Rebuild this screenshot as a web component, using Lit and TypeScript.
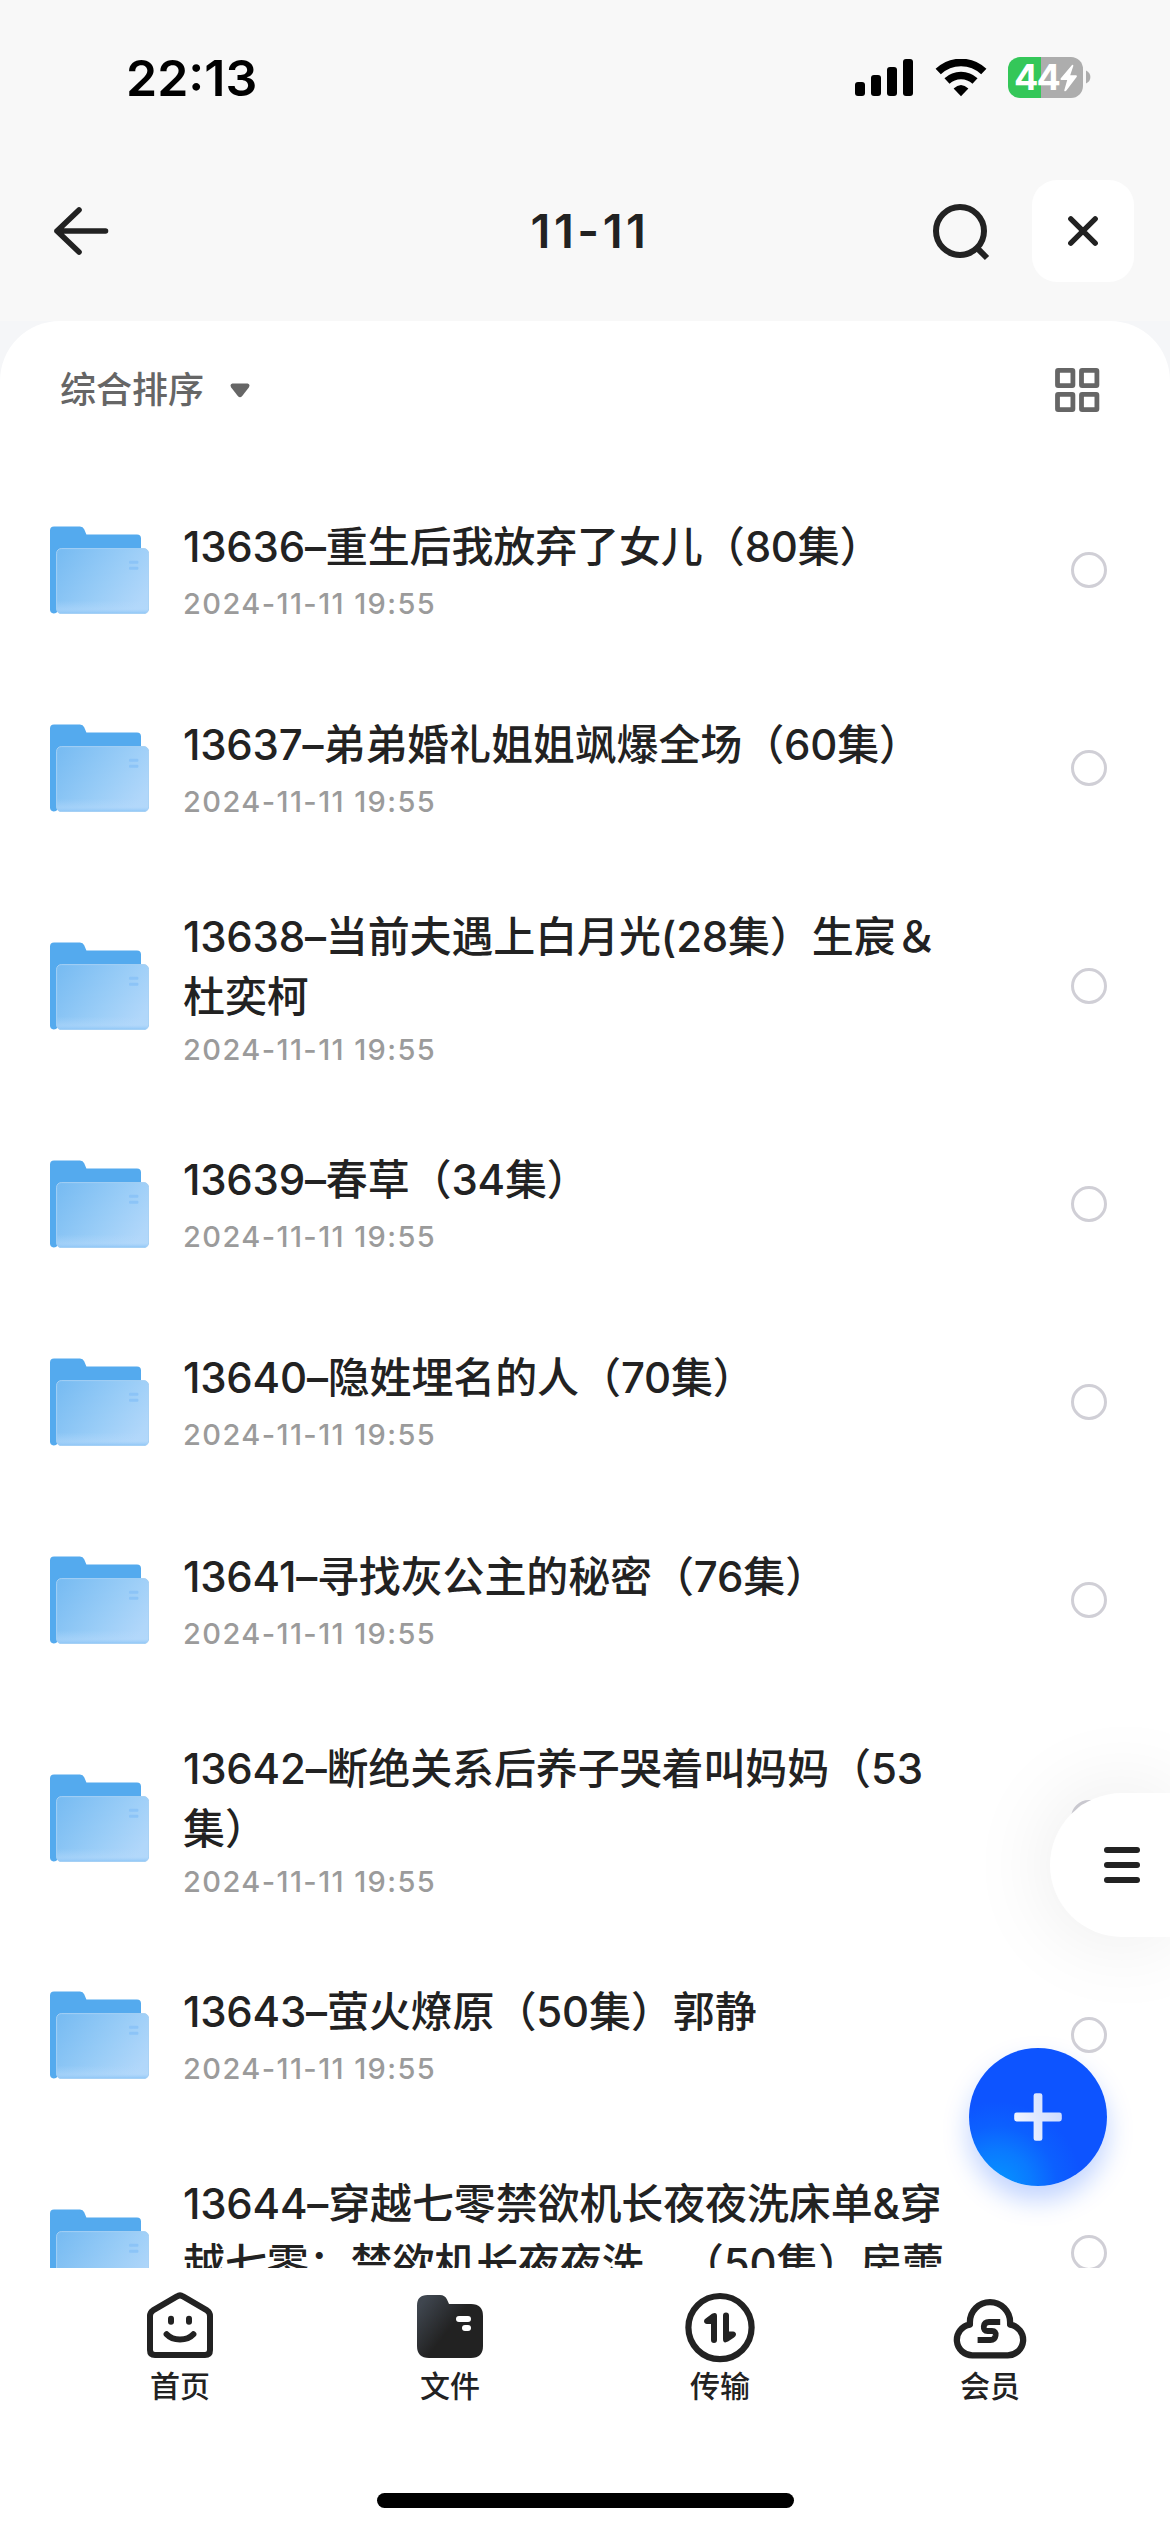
import { LitElement, html, css, svg } from "lit";
import { customElement, property } from "lit/decorators.js";

interface Entry {
  lines: string[];
  time: string;
}

const ENTRIES: Entry[] = [
  { lines: ["13636–重生后我放弃了女儿（80集）"], time: "2024-11-11 19:55" },
  { lines: ["13637–弟弟婚礼姐姐飒爆全场（60集）"], time: "2024-11-11 19:55" },
  { lines: ["13638–当前夫遇上白月光(28集）生宸＆", "杜奕柯"], time: "2024-11-11 19:55" },
  { lines: ["13639–春草（34集）"], time: "2024-11-11 19:55" },
  { lines: ["13640–隐姓埋名的人（70集）"], time: "2024-11-11 19:55" },
  { lines: ["13641–寻找灰公主的秘密（76集）"], time: "2024-11-11 19:55" },
  { lines: ["13642–断绝关系后养子哭着叫妈妈（53", "集）"], time: "2024-11-11 19:55" },
  { lines: ["13643–萤火燎原（50集）郭静"], time: "2024-11-11 19:55" },
  { lines: ["13644–穿越七零禁欲机长夜夜洗床单&穿", "越七零：禁欲机长夜夜洗…（50集）房蕾"], time: "2024-11-11 19:55" },
];

@customElement("status-bar")
class StatusBar extends LitElement {
  static styles = css`
    :host {
      display: flex;
      justify-content: space-between;
      height: 141px;
      box-sizing: border-box;
      padding: 48px 79px 0 126px;
      font-family: Inter, "Liberation Sans", sans-serif;
    }
    .time {
      font-size: 50px;
      line-height: 60px;
      font-weight: 600;
      color: #000;
    }
    .icons {
      display: flex;
      align-items: flex-start;
      padding-top: 9px;
    }
    .signal { margin: 2px 22px 0 0; display: block; }
    .wifi { margin: 2px 21px 0 0; display: block; }
    .battery {
      width: 75px;
      height: 41px;
      border-radius: 12px;
      background: linear-gradient(90deg, #34c759 33px, #adadad 33px);
      display: flex;
      align-items: center;
      padding-left: 6px;
      box-sizing: border-box;
      color: #fff;
      font-size: 36px;
      line-height: 41px;
      font-weight: 700;
      letter-spacing: -1.8px;
    }
    .bolt { display: block; flex: none; }
    .tip { margin: 13px 0 0 3px; display: block; }
  `;
  render() {
    return html`
      <div class="time">22:13</div>
      <div class="icons">
        <svg class="signal" width="58" height="37" viewBox="0 0 58 37">
          <rect x="0" y="23" width="10" height="14" rx="3" />
          <rect x="16" y="16" width="10" height="21" rx="3" />
          <rect x="32" y="8" width="10" height="29" rx="3" />
          <rect x="48" y="0" width="10" height="37" rx="3" />
        </svg>
        <svg class="wifi" width="52" height="38" viewBox="0 0 52 38">
          <path d="M3.2 12.6A33 33 0 0 1 48.8 12.6" fill="none" stroke="#000" stroke-width="7.6" />
          <path d="M12 22A20.4 20.4 0 0 1 40 22" fill="none" stroke="#000" stroke-width="7.4" />
          <path d="M26 37.2L18.6 29.6Q26 22.4 33.4 29.6Z" />
        </svg>
        <div class="battery">
          <span>44</span>
          <svg class="bolt" width="19" height="28" viewBox="0 0 19 28">
            <path d="M13 1L1.6 14.6Q1 16 2.4 16H8.2L5.2 26.4Q6 28 7.4 26.6L17.8 12.8Q18.4 11.3 17 11.3H11.2L14.4 1.8Q14 0.4 13 1Z" fill="#fff" />
          </svg>
        </div>
        <svg class="tip" width="5" height="14" viewBox="0 0 5 14">
          <path d="M0 0.5Q4.4 2.5 4.4 7Q4.4 11.5 0 13.5Z" fill="#adadad" />
        </svg>
      </div>
    `;
  }
}

@customElement("title-bar")
class TitleBar extends LitElement {
  static styles = css`
    :host {
      display: grid;
      grid-template-columns: 1fr auto 1fr;
      align-items: center;
      height: 180px;
      box-sizing: border-box;
      padding: 0 36px 0 51px;
      font-family: Inter, "Liberation Sans", sans-serif;
    }
    svg { display: block; }
    .title {
      font-size: 47px;
      line-height: 60px;
      font-weight: 600;
      color: #222;
      letter-spacing: 3.5px;
      padding-right: 5px;
    }
    .actions {
      display: flex;
      justify-content: flex-end;
      align-items: center;
      gap: 42px;
    }
    .close {
      width: 102px;
      height: 102px;
      border-radius: 25px;
      background: #fff;
      display: flex;
      align-items: center;
      justify-content: center;
    }
  `;
  render() {
    return html`
      <svg width="60" height="60" viewBox="0 0 60 60" fill="none" stroke="#222" stroke-width="5.6" stroke-linecap="round" stroke-linejoin="round">
        <path d="M28 9L6 30L28 51M6 30H54.5" />
      </svg>
      <div class="title">11-11</div>
      <div class="actions">
        <svg width="60" height="60" viewBox="0 0 60 60" fill="none" stroke="#222">
          <circle cx="30" cy="30" r="24" stroke-width="6" />
          <path d="M46 45.8L57 57" stroke-width="6" />
        </svg>
        <div class="close">
          <svg width="32" height="32" viewBox="0 0 32 32" fill="none" stroke="#222" stroke-width="5.4" stroke-linecap="round">
            <path d="M3.8 3.8L28.2 28.2M28.2 3.8L3.8 28.2" />
          </svg>
        </div>
      </div>
    `;
  }
}

@customElement("sort-bar")
class SortBar extends LitElement {
  static styles = css`
    :host {
      display: flex;
      justify-content: space-between;
      align-items: center;
      height: 138px;
      padding: 0 70px 0 60px;
      margin-bottom: 12px;
      color: #666;
      font-family: Inter, "Noto Sans CJK SC", sans-serif;
    }
    .sort {
      display: flex;
      align-items: center;
      gap: 26px;
      font-size: 36px;
      line-height: 54px;
      font-weight: 500;
    }
    svg { display: block; }
  `;
  render() {
    const squares = [[0, 0], [24, 0], [0, 24], [24, 24]];
    return html`
      <div class="sort">
        <span>综合排序</span>
        <svg width="20" height="15" viewBox="0 0 20 15">
          <path d="M2.4 0.5H17.6Q20.6 1.6 18.8 4.4L12 13.2Q10 15.2 8 13.2L1.2 4.4Q-0.6 1.6 2.4 0.5Z" fill="#666" />
        </svg>
      </div>
      <svg width="45" height="44" viewBox="0 0 45 44" fill="none" stroke="#666" stroke-width="4.8">
        ${squares.map(([x, y]) => svg`<rect x=${x + 2.5} y=${y + 2.4} width="15.4" height="15.2" rx="0.6" />`)}
      </svg>
    `;
  }
}

/** Wraps the Latin runs of a name so that they can be spaced on their own. */
const mixed = (line: string) =>
  line
    .split(/([0-9–(&]+)/)
    .filter(Boolean)
    .map((part) => (/^[0-9–(&]/.test(part) ? html`<span class="latin">${part}</span>` : part));

@customElement("folder-row")
class FolderRow extends LitElement {
  @property({ attribute: false }) entry!: Entry;

  static styles = css`
    :host {
      display: block;
      font-family: Inter, "Noto Sans CJK SC", sans-serif;
    }
    .row {
      display: flex;
      align-items: center;
      height: 198.3px;
      padding: 0 63px 0 50px;
    }
    .row.tall { height: 236.8px; }
    .folder { display: block; flex: none; }
    .text {
      flex: 1;
      display: flex;
      flex-direction: column;
      gap: 7px;
      padding-left: 34px;
      white-space: nowrap;
    }
    .tall .text {
      gap: 3px;
      padding-top: 5px;
    }
    .name {
      font-size: 42px;
      line-height: 60px;
      font-weight: 500;
      letter-spacing: -0.12px;
      color: #222;
    }
    .latin {
      font-weight: 450;
      letter-spacing: -0.2px;
    }
    .time {
      font-size: 29px;
      line-height: 40px;
      font-weight: 500;
      letter-spacing: 1.4px;
      color: #9b9b9b;
    }
    .radio {
      flex: none;
      width: 36px;
      height: 36px;
      box-sizing: border-box;
      border: 3.5px solid #d0cfd6;
      border-radius: 50%;
    }
  `;
  render() {
    const { lines, time } = this.entry;
    return html`
      <div class="row ${lines.length > 1 ? "tall" : ""}">
        <svg class="folder" width="99" height="88" viewBox="0 0 99 88">
          <defs>
            <linearGradient id="front" x1="0" y1="0.15" x2="1" y2="0.65">
              <stop offset="0" stop-color="#79bcf2" />
              <stop offset="0.6" stop-color="#9acdf7" />
              <stop offset="1" stop-color="#b1d7fa" />
            </linearGradient>
            <linearGradient id="base" x1="0" y1="0" x2="0" y2="1">
              <stop offset="0.8" stop-color="#b4d9fb" stop-opacity="0" />
              <stop offset="0.93" stop-color="#b4d9fb" stop-opacity="0.5" />
              <stop offset="1" stop-color="#8cc5f6" />
            </linearGradient>
          </defs>
          <path d="M0 4.5Q0 0.5 4 0.5H30Q33 0.5 34.2 3.2L36.4 8.4H87Q91 8.4 91 12.4V60H8V84Q7 87.5 3.6 87.5Q0 87 0 83.5Z" fill="#54aaee" />
          <rect x="6.6" y="22.6" width="92" height="65" rx="4.6" fill="url(#front)" />
          <rect x="6.6" y="22.6" width="92" height="65" rx="4.6" fill="url(#base)" stroke="#a5d0f4" stroke-width="1" />
          <rect x="79" y="34.8" width="9.4" height="3" rx="1" fill="#8cc4f7" />
          <rect x="79" y="40.8" width="9.4" height="3" rx="1" fill="#8cc4f7" />
        </svg>
        <div class="text">
          <div>${lines.map((l) => html`<div class="name">${mixed(l)}</div>`)}</div>
          <div class="time">${time}</div>
        </div>
        <div class="radio"></div>
      </div>
    `;
  }
}

@customElement("tab-bar")
class TabBar extends LitElement {
  static styles = css`
    :host {
      display: flex;
      flex-direction: column;
      justify-content: space-between;
      align-items: center;
      height: 264px;
      box-sizing: border-box;
      padding: 18px 45px 24px;
      background: #fff;
      font-family: "Noto Sans CJK SC", sans-serif;
    }
    .tabs { display: flex; align-self: stretch; }
    .tab {
      flex: 1;
      display: flex;
      flex-direction: column;
      align-items: center;
      font-size: 30px;
      line-height: 40px;
      font-weight: 500;
      color: #222;
    }
    svg { display: block; }
    .handle {
      width: 417px;
      height: 15px;
      border-radius: 8px;
      background: #000;
    }
  `;
  render() {
    return html`
      <div class="tabs">
        <div class="tab">
          <svg width="78" height="78" viewBox="0 0 78 78" fill="none" stroke="#222" stroke-width="6" stroke-linecap="round" stroke-linejoin="round">
            <path d="M36 10.4Q39 8.4 42 10.4L66 24.4Q69 26.4 69 30V64Q69 69 64 69H14Q9 69 9 64V30Q9 26.4 12 24.4Z" />
            <path d="M30 32.8V35.8M48 32.8V35.8" />
            <path d="M25.6 48.2C32 55.2 46 55.2 52.4 48.2" />
          </svg>
          <span>首页</span>
        </div>
        <div class="tab">
          <svg width="78" height="78" viewBox="0 0 78 78">
            <defs>
              <linearGradient id="dark" x1="0.05" y1="0.15" x2="0.52" y2="0.5">
                <stop offset="0" stop-color="#3f464f" />
                <stop offset="1" stop-color="#222" />
              </linearGradient>
            </defs>
            <path d="M6 19.5Q6 9 16.5 9H29Q34 9 36 13.5L38 18H60Q72 18 72 30V60Q72 72 60 72H18Q6 72 6 60Z" fill="url(#dark)" />
            <rect x="45" y="30" width="15" height="6" rx="3" fill="#fff" />
            <rect x="51" y="39" width="9" height="6" rx="3" fill="#fff" />
          </svg>
          <span>文件</span>
        </div>
        <div class="tab">
          <svg width="78" height="78" viewBox="0 0 78 78">
            <circle cx="39" cy="41.6" r="31.6" fill="none" stroke="#222" stroke-width="6.2" />
            <path d="M36 30V54Q36 57 33 57Q30 57 30 54V38H26Q23 37.6 23 35Q23 33.4 25 32.2L31 27.8Q36 25.6 36 30Z" fill="#222" />
            <path d="M42 53V29.4Q42 26.4 45 26.4Q48 26.4 48 29.4V45.6H52Q55 46 55 48.6Q55 50 53 51.4L47 55.6Q42 58 42 53Z" fill="#222" />
          </svg>
          <span>传输</span>
        </div>
        <div class="tab">
          <svg width="78" height="78" viewBox="0 0 78 78" fill="none" stroke="#222" stroke-width="6.3" stroke-linejoin="round">
            <path d="M21.7 69.4A15.5 15.5 0 0 1 18.9 38.6V36.2A20.1 20.1 0 0 1 59.1 36.2V38.6A15.5 15.5 0 0 1 56.3 69.4Z" />
            <path d="M49.2 36H38Q33.4 36 32.8 40.4Q32.4 45 36.6 45H41Q45.2 45 44.6 49.4Q43.8 54 39.4 54H26.6" stroke-width="5.8" />
          </svg>
          <span>会员</span>
        </div>
      </div>
      <div class="handle"></div>
    `;
  }
}

@customElement("app-root")
class AppRoot extends LitElement {
  static styles = css`
    :host {
      display: flex;
      flex-direction: column;
      position: relative;
      width: 1170px;
      height: 2532px;
      overflow: hidden;
      background: #f8f8f8;
    }
    .backdrop {
      flex: 1;
      min-height: 0;
      background: #f5f6f8;
    }
    .sheet {
      height: 100%;
      box-sizing: border-box;
      overflow: hidden;
      background: #fff;
      border-radius: 60px 60px 0 0;
    }
    tab-bar { flex: none; }
    .drawer {
      position: absolute;
      right: 0;
      top: 1793px;
      width: 120px;
      height: 144px;
      box-sizing: border-box;
      padding-left: 54px;
      border-radius: 72px 0 0 72px;
      background: #fff;
      box-shadow: 0 0 90px rgba(0, 0, 0, 0.09);
      display: flex;
      flex-direction: column;
      justify-content: center;
      gap: 9px;
    }
    .bar {
      width: 36px;
      height: 6px;
      border-radius: 3px;
      background: #222;
    }
    .fab {
      position: absolute;
      right: 63px;
      top: 2047.5px;
      width: 138px;
      height: 138px;
      border-radius: 50%;
      background: radial-gradient(circle at 20% 100%, #0596ff 0, #0a7aff 20%, #0c60ff 34%, #0d54ff 48%);
      box-shadow: 0 14px 26px rgba(13, 84, 255, 0.26);
      display: flex;
      align-items: center;
      justify-content: center;
    }
  `;
  render() {
    return html`
      <status-bar></status-bar>
      <title-bar></title-bar>
      <div class="backdrop">
        <div class="sheet">
          <sort-bar></sort-bar>
          ${ENTRIES.map((e) => html`<folder-row .entry=${e}></folder-row>`)}
        </div>
      </div>
      <tab-bar></tab-bar>
      <div class="drawer">
        <div class="bar"></div>
        <div class="bar"></div>
        <div class="bar"></div>
      </div>
      <div class="fab">
        <svg width="48" height="48" viewBox="0 0 48 48">
          <defs>
            <linearGradient id="plus" x1="0" y1="0.6" x2="1" y2="0.3">
              <stop offset="0" stop-color="#f1f5ff" />
              <stop offset="1" stop-color="#ccdbff" />
            </linearGradient>
          </defs>
          <path d="M22 0.2H26Q28.4 0.2 28.4 2.6V19.6H45.4Q47.8 19.6 47.8 22V26Q47.8 28.4 45.4 28.4H28.4V45.4Q28.4 47.8 26 47.8H22Q19.6 47.8 19.6 45.4V28.4H2.6Q0.2 28.4 0.2 26V22Q0.2 19.6 2.6 19.6H19.6V2.6Q19.6 0.2 22 0.2Z" fill="url(#plus)" />
        </svg>
      </div>
    `;
  }
}
